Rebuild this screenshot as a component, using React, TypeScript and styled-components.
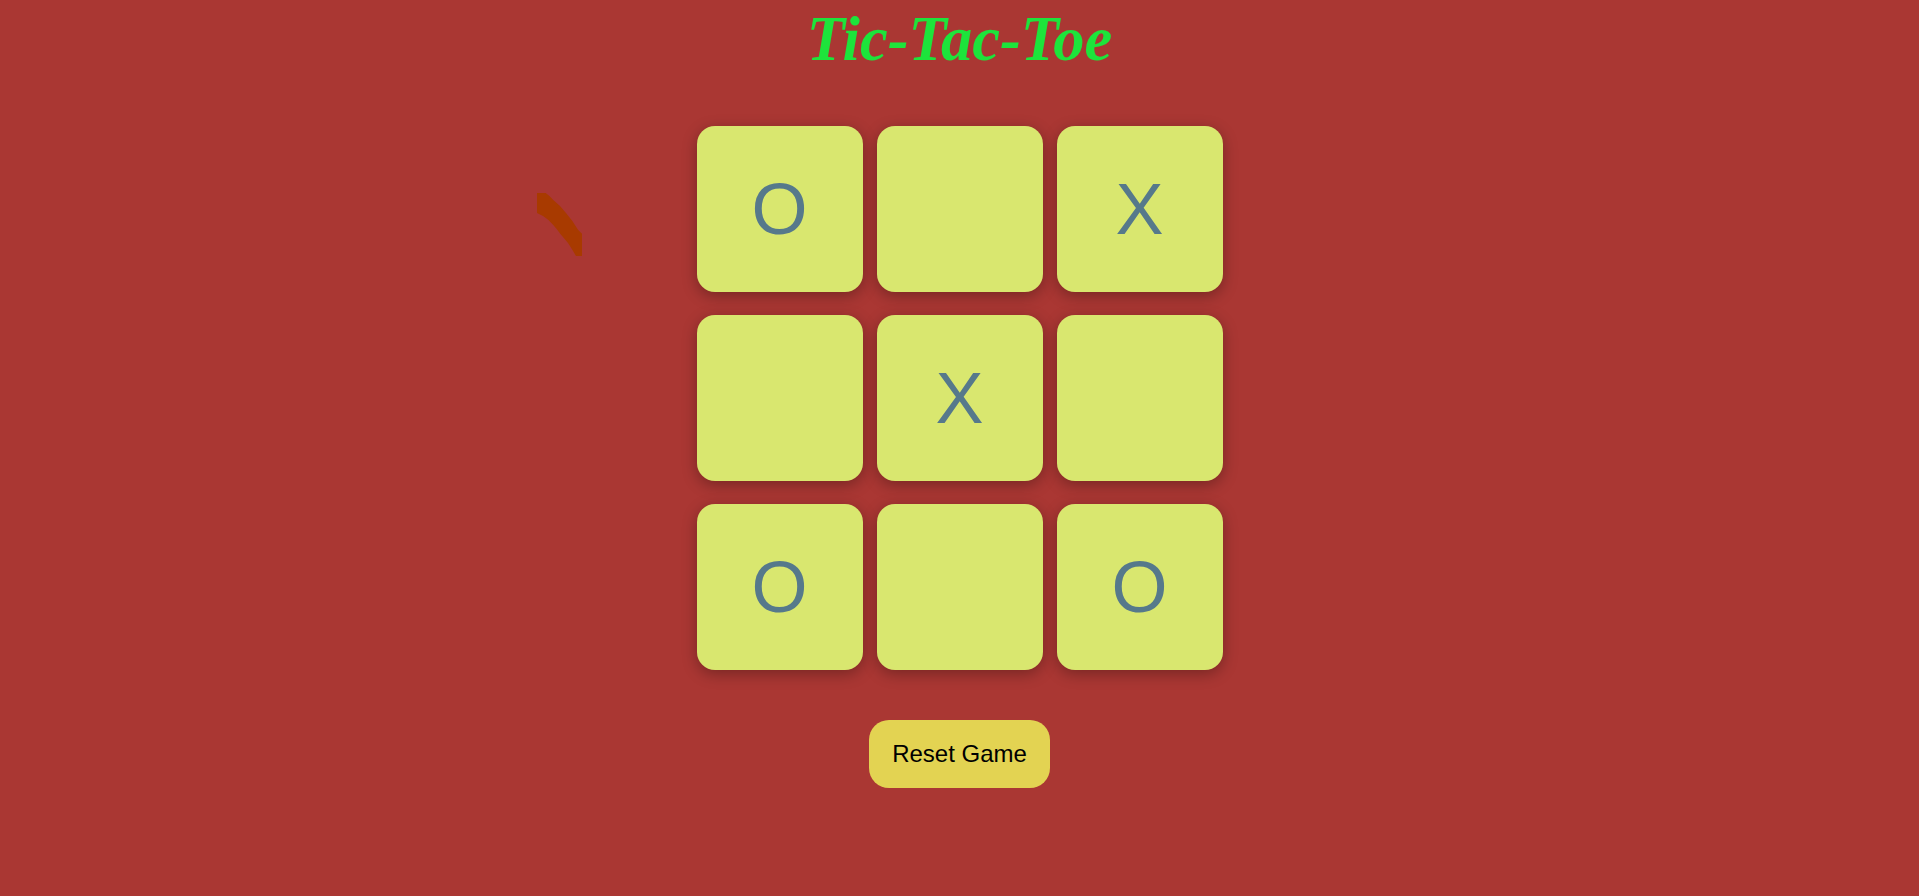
import React from "react";
import styled, { createGlobalStyle } from "styled-components";

const GlobalStyle = createGlobalStyle`
  html, body {
    margin: 0;
    padding: 0;
    background: #aa3733;
    min-height: 100%;
  }
  body {
    font-family: "Liberation Sans", Arial, sans-serif;
  }
`;

const Page = styled.div`
  position: relative;
  min-height: 896px;
  display: flex;
  flex-direction: column;
  align-items: center;
`;

const Title = styled.h1`
  margin: 3px 0 0;
  font-family: "Liberation Serif", "Times New Roman", serif;
  font-style: italic;
  font-weight: bold;
  font-size: 62.5px;
  color: #1de43b;
`;

const Board = styled.div`
  margin-top: 50px;
  display: grid;
  grid-template-columns: repeat(3, 166px);
  grid-auto-rows: 166px;
  column-gap: 14px;
  row-gap: 23px;
`;

const Cell = styled.div`
  background: #d9e76f;
  border-radius: 18px;
  box-shadow: 0 4px 15px rgba(0, 0, 0, 0.3);
  display: flex;
  align-items: center;
  justify-content: center;
  font-family: "Liberation Sans", Arial, sans-serif;
  font-size: 72px;
  color: #56798b;
  user-select: none;
`;

const ResetButton = styled.button`
  margin-top: 50px;
  padding: 20px 23px;
  border: none;
  border-radius: 20px;
  background: #e3d352;
  color: #000;
  font-family: "Liberation Sans", Arial, sans-serif;
  font-size: 24px;
  cursor: pointer;
`;

const Smudge = styled.svg`
  position: absolute;
  left: 537px;
  top: 193px;
`;

const board = ["O", "", "X", "", "X", "", "O", "", "O"];

export default function App() {
  return (
    <>
      <GlobalStyle />
      <Page>
        <Title>Tic-Tac-Toe</Title>
        <Board>
          {board.map((v, i) => (
            <Cell key={i}>{v}</Cell>
          ))}
        </Board>
        <ResetButton>Reset Game</ResetButton>
        <Smudge width="46" height="64" viewBox="0 0 46 64">
          <path
            d="M0 0 L8.7 0 Q13 3 16 6.7 Q24 13 29 20 Q36 28 41 36.7 L45 40.7 L45 63 L39 63 Q35 56 31 50 Q27 45 24 41.7 Q20 36 16 31.7 Q11 26 6 23 L0 20 Z"
            fill="#a83a00"
          />
        </Smudge>
      </Page>
    </>
  );
}
